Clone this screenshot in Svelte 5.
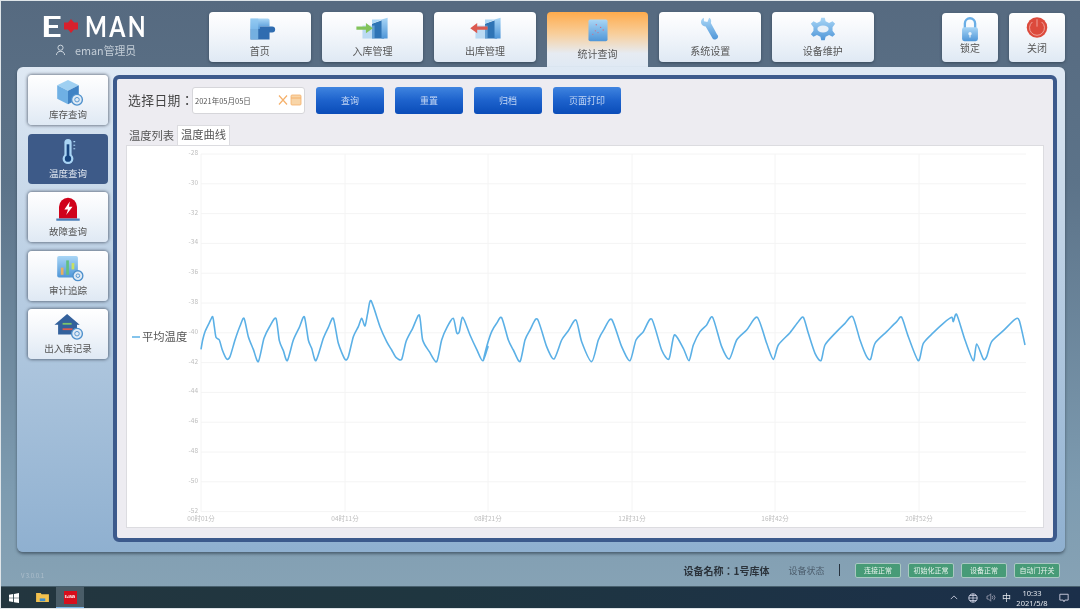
<script>
  const navItems = [
    { label: "首页", icon: "home" },
    { label: "入库管理", icon: "in" },
    { label: "出库管理", icon: "out" },
    { label: "统计查询", icon: "stats", active: true },
    { label: "系统设置", icon: "wrench" },
    { label: "设备维护", icon: "gear" }
  ];
  const sideItems = [
    { label: "库存查询", icon: "box" },
    { label: "温度查询", icon: "thermo", active: true },
    { label: "故障查询", icon: "alarm" },
    { label: "审计追踪", icon: "audit" },
    { label: "出入库记录", icon: "house" }
  ];
  const actions = ["查询", "重置", "归档", "页面打印"];
  const badges = ["连接正常", "初始化正常", "设备正常", "自动门开关"];

  // chart svg origin on the page
  const ox = 127;
  const oy = 146;
  const yTicks = [];
  for (let i = 0; i < 13; i++) yTicks.push({ label: -28 - i * 2, y: 154 + i * 29.8 - oy });
  const xTicks = [
    ["00时01分", 201], ["04时11分", 345], ["08时21分", 488],
    ["12时31分", 632], ["16时42分", 775], ["20时52分", 919]
  ].map(([label, x]) => ({ label, x: x - ox }));

  // traced from crops of the curve
  const seg1 = [[33,178],[38,150],[45,125],[58,98],[68,80],[73,110],[78,142],[88,150],[97,180],[110,207],[120,200],[135,150],[150,108],[162,85],[175,140],[190,178],[205,215],[222,145],[240,108],[258,85],[268,152],[280,182],[292,212],[310,150],[328,112],[343,80],[355,150],[365,175],[378,212],[400,145],[415,112],[430,85],[445,160],[465,208],[475,200],[490,140],[505,110],[515,85],[525,108],[533,70],[543,32],[570,110],[590,155],[605,180],[618,202],[635,208],[648,155],[668,115],[688,75],[698,150],[718,185],[740,215],[755,150],[772,110],[790,85],[800,128],[808,125],[818,82],[840,135],[860,178],[878,212],[894,170]];
  const seg2 = [[10,212],[20,170],[35,125],[50,100],[65,83],[85,150],[100,180],[120,215],[135,150],[150,120],[172,87],[200,170],[222,207],[245,150],[265,122],[288,90],[305,155],[335,215],[355,150],[372,118],[395,88],[425,170],[450,212],[468,150],[490,125],[515,87],[545,180],[567,207],[583,135],[610,175],[627,212],[640,165],[660,125],[680,105],[698,82],[725,170],[748,207],[770,150],[800,120],[832,82],[860,160],[880,208]];
  const seg3 = [[25,165],[60,128],[85,95],[100,82],[115,130],[135,190],[153,212],[165,165],[195,130],[225,100],[248,80],[270,150],[290,200],[302,207],[315,160],[350,125],[380,95],[395,82],[415,140],[445,212],[460,160],[490,128],[520,100],[545,82],[550,95],[560,73],[585,150],[610,212],[620,162],[640,207],[650,200],[665,155],[700,122],[735,88],[748,92],[765,165]];
  const toChart = (pts, x0) => pts.map(([x, y]) => [x0 + x / 3 - ox, 290 + y / 3 - oy]);
  const pts = [...toChart(seg1, 190), ...toChart(seg2, 480), ...toChart(seg3, 770)];

  // catmull-rom so the peaks stay on the traced points
  let curve = `M${pts[0][0]} ${pts[0][1]}`;
  for (let i = 0; i < pts.length - 1; i++) {
    const p0 = pts[i - 1] || pts[i];
    const p1 = pts[i];
    const p2 = pts[i + 1];
    const p3 = pts[i + 2] || p2;
    const c1x = p1[0] + (p2[0] - p0[0]) / 8;
    const c1y = p1[1] + (p2[1] - p0[1]) / 8;
    const c2x = p2[0] - (p3[0] - p1[0]) / 8;
    const c2y = p2[1] - (p3[1] - p1[1]) / 8;
    curve += ` C${c1x} ${c1y} ${c2x} ${c2y} ${p2[0]} ${p2[1]}`;
  }
</script>

{#snippet icon(name)}
  <svg class="icon" viewBox="0 0 40 30" aria-hidden="true">
    <defs>
      <linearGradient id="sky-{name}" x1="0" y1="0" x2="0" y2="1">
        <stop offset="0" stop-color="#a9d6f6" />
        <stop offset="1" stop-color="#4f96d8" />
      </linearGradient>
    </defs>
    {#if name === "home"}
      <path d="M9 3h20a2 2 0 0 1 2 2v7H20v3H9z" fill="url(#sky-home)" />
      <path d="M9 15h11v-3h14a3 3 0 0 1 0 7H31v8H9z" fill="#2f6cb0" />
      <path d="M9 3h9v24H9z" fill="#8cc6f0" opacity=".75" />
    {:else if name === "in"}
      <path d="M20 9 34 4v22H20z" fill="#2f74b5" />
      <path d="M31 4 38 2v24h-7z" fill="url(#sky-in)" />
      <path d="M20 9 32 4H20z" fill="#a9d6f6" />
      <path d="M9 11h14v15H9z" fill="#8cc3ec" opacity=".55" />
      <path d="M2 12h11V8l8 6-8 6v-4H2z" fill="#82c35a" />
    {:else if name === "out"}
      <path d="M20 9 34 4v22H20z" fill="#2f74b5" />
      <path d="M31 4 38 2v24h-7z" fill="url(#sky-out)" />
      <path d="M20 9 32 4H20z" fill="#a9d6f6" />
      <path d="M9 11h14v15H9z" fill="#8cc3ec" opacity=".55" />
      <path d="M23 12H11V8l-8 6 8 6v-4h12z" fill="#dc5a50" />
    {:else if name === "stats"}
      <rect x="9" y="3" width="22" height="25" rx="2" fill="url(#sky-stats)" />
      <g fill="#d0708a">
        <circle cx="14" cy="20" r=".8" /><circle cx="17" cy="16" r=".8" />
        <circle cx="20" cy="18" r=".8" /><circle cx="23" cy="12" r=".8" />
        <circle cx="26" cy="15" r=".8" /><circle cx="18" cy="9" r=".8" />
      </g>
    {:else if name === "wrench"}
      <path d="M13 2c-3 1-4 4-3 7 1 2 3 3 5 3l8 14c1 2 5 1 6-1 1-2 0-3-1-4l-7-13c1-3 0-5-2-6l-2 5-4-1z" fill="url(#sky-wrench)" />
    {:else if name === "gear"}
      <path d="M18 2h4l1 4 4 2 4-2 3 3-3 4v4l3 4-3 3-4-2-4 2-1 4h-4l-1-4-4-2-4 2-3-3 3-4v-4L6 9l3-3 4 2 4-2z" fill="url(#sky-gear)" />
      <ellipse cx="20" cy="15" rx="6.500" ry="4" fill="#e8f0f8" />
    {:else if name === "box"}
      <path d="M20 1 32 7 20 13 8 7z" fill="#9fd0f2" />
      <path d="M8 7l12 6v15L8 22z" fill="#6fb0e4" />
      <path d="M32 7 20 13v15l12-6z" fill="#3f82c4" />
      <circle cx="30" cy="23" r="6" fill="#dfeaf5" stroke="#4d90cc" stroke-width="1.500" />
      <circle cx="30" cy="23" r="2.500" fill="none" stroke="#4d90cc" />
    {:else if name === "thermo"}
      <rect x="16" y="1" width="8" height="21" rx="4" fill="#a9d4f4" />
      <circle cx="20" cy="23" r="6" fill="#a9d4f4" />
      <rect x="18.500" y="7" width="3" height="15" fill="#17457f" />
      <circle cx="20" cy="23" r="3.500" fill="#17457f" />
      <path d="M26 4h2M26 8h2M26 12h2" stroke="#a9d4f4" stroke-width="1.200" />
    {:else if name === "alarm"}
      <path d="M10 25V12a10 10 0 0 1 20 0v13z" fill="#d0021b" />
      <path d="M7 25h26v2.500H7z" fill="#4d80b8" />
      <path d="M22 6l-6 9h4l-2 6 7-9h-4z" fill="#fff" />
    {:else if name === "audit"}
      <rect x="8" y="1" width="23" height="24" rx="2" fill="url(#sky-audit)" />
      <rect x="12" y="14" width="3" height="8" fill="#e8b060" />
      <rect x="18" y="6" width="3" height="16" fill="#62c080" />
      <rect x="24" y="9" width="3" height="7" fill="#c8e060" />
      <circle cx="31" cy="23" r="5.500" fill="#dfeaf5" stroke="#4d90cc" stroke-width="1.500" />
      <circle cx="31" cy="23" r="2" fill="none" stroke="#4d90cc" />
    {:else if name === "house"}
      <path d="M19 1 33 13h-3v11H9V13H5z" fill="#33619c" />
      <path d="M14 12h10" stroke-width="2" fill="none" stroke="#7cc36a" />
      <path d="M14 18h11" stroke-width="2" fill="none" stroke="#dc5a50" />
      <circle cx="30" cy="23" r="6" fill="#dfeaf5" stroke="#4d90cc" stroke-width="1.500" />
      <circle cx="30" cy="23" r="2.500" fill="none" stroke="#4d90cc" />
    {:else if name === "lock"}
      <path d="M14.500 14V9a5.500 5.500 0 0 1 11 0v5" fill="none" stroke="#6aaee6" stroke-width="2.500" />
      <rect x="11.500" y="13" width="17" height="15" rx="2.500" fill="url(#sky-lock)" />
      <circle cx="20" cy="20" r="1.800" fill="#eaf3fb" />
      <path d="M20 20v4" stroke="#eaf3fb" stroke-width="1.200" />
    {:else if name === "power"}
      <circle cx="20" cy="13.500" r="11" fill="#dc4a3c" />
      <path d="M15 7.500a8 8 0 1 0 10 0" fill="none" stroke="#f0a8a0" stroke-width="1" />
      <path d="M20 4.500v8" stroke="#f0a8a0" stroke-width="1" />
    {/if}
  </svg>
{/snippet}

<div class="screen">
  <header class="topbar">
    <div class="brand">
      <div class="logo">
        <span class="e">E</span>
        <svg class="plus" viewBox="0 0 16 16" aria-hidden="true">
          <path d="M8 1l3 3.500h4v7h-4L8 15l-3-3.500H1v-7h4z" fill="#d8202c" />
        </svg>
        <span class="man">MAN</span>
      </div>
      <div class="user">
        <svg viewBox="0 0 12 13" aria-hidden="true">
          <circle cx="6" cy="4" r="2.800" fill="none" stroke="#d5dde5" />
          <path d="M1.500 12c.5-3 2-4 4.500-4s4 1 4.500 4" fill="none" stroke="#d5dde5" />
        </svg>
        eman管理员
      </div>
    </div>
    <nav class="nav">
      {#each navItems as item}
        <button class="nav-btn" class:active={item.active}>
          {@render icon(item.icon)}
          <span>{item.label}</span>
        </button>
      {/each}
    </nav>
    <div class="sys">
      <button class="sys-btn">{@render icon("lock")}<span>锁定</span></button>
      <button class="sys-btn">{@render icon("power")}<span>关闭</span></button>
    </div>
  </header>

  <main class="panel">
    <aside class="side">
      {#each sideItems as item}
        <button class="side-btn" class:active={item.active}>
          {@render icon(item.icon)}
          <span>{item.label}</span>
        </button>
      {/each}
    </aside>

    <section class="content">
      <div class="toolbar">
        <span class="date-label">选择日期：</span>
        <div class="date-input">
          <span>2021年05月05日</span>
          <svg viewBox="0 0 24 12" aria-hidden="true">
            <path d="M1 1.500l8 9M9 1.500l-8 9" stroke="#f5b06a" stroke-width="1.200" fill="none" />
            <rect x="13" y="1" width="10" height="10" rx="1" fill="#f8d5a8" stroke="#f5b06a" stroke-width=".8" />
            <path d="M13 4h10" stroke="#f5b06a" />
          </svg>
        </div>
        <div class="actions">
          {#each actions as a}
            <button class="action">{a}</button>
          {/each}
        </div>
      </div>

      <div class="tabs">
        <button class="tab">温度列表</button>
        <button class="tab current">温度曲线</button>
      </div>

      <div class="chart">
        <svg viewBox="0 0 916 381" width="916" height="381">
          {#each yTicks as t}
            <line x1={xTicks[0].x} x2="899" y1={t.y} y2={t.y} stroke="#f4f4f4" />
            <text x={xTicks[0].x - 3} y={t.y + 1} text-anchor="end" class="tick">{t.label}</text>
          {/each}
          {#each xTicks as t}
            <line x1={t.x} x2={t.x} y1={yTicks[0].y} y2={yTicks[12].y} stroke="#f4f4f4" />
            <text x={t.x} y="374.500" text-anchor="middle" class="tick">{t.label}</text>
          {/each}
          <path d={curve} fill="none" stroke="#5bb0e6" stroke-width="1.600" stroke-linejoin="round" />
          <line x1="5" x2="13" y1="191" y2="191" stroke="#5bb0e6" stroke-width="1.500" />
          <text x="15" y="195" class="legend">平均温度</text>
        </svg>
      </div>
    </section>
  </main>

  <div class="statusbar">
    <span class="version">V 3.0.0.1</span>
    <div class="status">
      <strong>设备名称：1号库体</strong>
      <span class="state">设备状态</span>
      <i class="divider"></i>
      <div class="badges">
        {#each badges as b}
          <span class="badge">{b}</span>
        {/each}
      </div>
    </div>
  </div>

  <footer class="taskbar">
    <div class="tasks">
      <span class="task">
        <svg viewBox="0 0 12 12" width="10" height="10" aria-hidden="true">
          <path d="M0 2l5-.7V5.700H0zM6 1.100 12 0v5.700H6zM0 6.300h5v4.400L0 10zM6 6.300h6V12l-6-1z" fill="#fff" />
        </svg>
      </span>
      <span class="task">
        <svg viewBox="0 0 14 12" width="13" height="11" aria-hidden="true">
          <path d="M0 1h5l1 1.500h8V11H0z" fill="#f2c14e" />
          <rect x="4" y="7" width="6" height="3" fill="#3d8fd0" />
        </svg>
      </span>
      <span class="task running"><b>E+MAN</b></span>
    </div>
    <div class="tray">
      <svg class="t-up" viewBox="0 0 10 6" width="8" height="5" aria-hidden="true"><path d="M1 5l4-4 4 4" fill="none" stroke="#dde" /></svg>
      <svg class="t-globe" viewBox="0 0 12 12" width="10" height="10" aria-hidden="true">
        <circle cx="6" cy="6" r="5" fill="none" stroke="#eef" />
        <path d="M1 6h10M6 1v10M2 3h8M2 9h8" stroke="#eef" stroke-width=".8" />
      </svg>
      <svg class="t-vol" viewBox="0 0 14 12" width="11" height="9" aria-hidden="true">
        <path d="M1 4h2l3-3v10L3 8H1z" fill="none" stroke="#aab" />
        <path d="M8 4a3 3 0 0 1 0 4M10 2.500a5 5 0 0 1 0 7" fill="none" stroke="#aab" />
      </svg>
      <span class="ime">中</span>
      <div class="clock"><span>10:33</span><span>2021/5/8</span></div>
      <svg class="t-note" viewBox="0 0 12 12" width="10" height="10" aria-hidden="true">
        <path d="M1 1.500h10v7H7l-1 2-1-2H1z" fill="none" stroke="#dde" />
      </svg>
    </div>
  </footer>
</div>

<style>
  :global(body) {
    margin: 0;
    background: #dfe5e9;
  }

  .screen {
    width: 1079px;
    height: 607px;
    margin: 1px 0 0 1px;
    display: flex;
    flex-direction: column;
    background: linear-gradient(to bottom, #566a80 0%, #5c7389 30%, #7d9bb0 80%, #88a4b6 100%);
    font-family: "Noto Sans CJK SC", "Noto Sans", sans-serif;
    overflow: hidden;
    filter: blur(0.6px);
  }

  button {
    font-family: inherit;
    border: 0;
    padding: 0;
  }

  .icon {
    width: 40px;
    height: 30px;
    display: block;
  }

  /* header */
  .topbar {
    height: 66px;
    flex: none;
    display: flex;
    align-items: flex-start;
    padding-top: 11px;
    box-sizing: border-box;
  }

  .brand {
    width: 208px;
    flex: none;
    padding: 1px 0 0 40px;
    box-sizing: border-box;
    color: #fff;
  }

  .logo {
    display: flex;
    align-items: center;
    height: 26px;
    font: 700 29px/26px "Lato", sans-serif;
  }

  .e {
    display: inline-block;
    width: 22px;
    transform: scaleX(1.250);
    transform-origin: left;
  }

  .plus {
    width: 16px;
    height: 16px;
    margin-right: 6px;
  }

  .man {
    display: inline-block;
    letter-spacing: 3px;
    transform: scaleX(0.8);
    transform-origin: left;
  }

  .user {
    display: flex;
    align-items: center;
    gap: 9px;
    margin: 4px 0 0 14px;
    font-size: 10.800px;
    line-height: 14px;
    color: #c2ccd6;
    white-space: nowrap;
  }

  .user svg {
    width: 11px;
    height: 12px;
  }

  .nav {
    display: flex;
    gap: 11px;
    flex: none;
  }

  .nav-btn {
    width: 101.600px;
    height: 50px;
    display: flex;
    flex-direction: column;
    align-items: center;
    padding-top: 4px;
    box-sizing: border-box;
    border-radius: 4px;
    background: linear-gradient(to bottom, #fff 0%, #f4f7fb 40%, #dfe9f4 100%);
    box-shadow: 0 1px 3px rgba(30, 45, 60, 0.55);
    font-size: 10px;
    line-height: 13px;
    color: #555;
  }

  .nav-btn .icon {
    height: 26px;
    width: 36px;
    margin-bottom: 2px;
  }

  .nav-btn.active {
    height: 55px;
    border-radius: 4px 4px 0 0;
    background: linear-gradient(to bottom, #ffab4c 0%, #f8cf9c 40%, #e6ebf2 75%, #dfe9f4 100%);
    box-shadow: none;
    padding-top: 5px;
  }

  .nav-btn.active span {
    margin-top: 2px;
  }

  .sys {
    display: flex;
    gap: 11px;
    margin-left: 68.400px;
    padding-top: 1px;
  }

  .sys-btn {
    width: 56px;
    height: 49px;
    display: flex;
    flex-direction: column;
    align-items: center;
    padding-top: 2px;
    box-sizing: border-box;
    border-radius: 4px;
    background: linear-gradient(to bottom, #fff 0%, #f4f7fb 40%, #dfe9f4 100%);
    box-shadow: 0 1px 3px rgba(30, 45, 60, 0.55);
    font-size: 10px;
    line-height: 13px;
    color: #555;
  }

  .sys-btn .icon {
    height: 28px;
    margin-bottom: -2px;
  }

  /* main panel */
  .panel {
    height: 485px;
    flex: none;
    margin: 0 15px 0 16px;
    display: flex;
    gap: 5px;
    padding: 8px 8px 10px 11px;
    box-sizing: border-box;
    border-radius: 6px;
    background: linear-gradient(to bottom, #dfe9f4 0%, #bcd0e4 40%, #8fb0d0 100%);
    box-shadow: 0 2px 3px rgba(40, 55, 70, 0.6);
  }

  .side {
    width: 80px;
    flex: none;
    display: flex;
    flex-direction: column;
    gap: 8.5px;
  }

  .side-btn {
    height: 50px;
    display: flex;
    flex-direction: column;
    align-items: center;
    padding-top: 4px;
    box-sizing: border-box;
    border-radius: 4px;
    background: linear-gradient(to bottom, #fff 0%, #f4f7fb 40%, #dfe9f4 100%);
    box-shadow: 0 0 3px 1px rgba(40, 50, 65, 0.55);
    font-size: 9.500px;
    line-height: 13px;
    color: #555;
  }

  .side-btn .icon {
    width: 36px;
    height: 27px;
    margin-bottom: 2px;
  }

  .side-btn.active {
    background: #3d5a88;
    color: #dfe6ef;
    box-shadow: none;
  }

  .content {
    flex: 1;
    min-width: 0;
    padding: 8px 9px 10px;
    box-sizing: border-box;
    display: flex;
    flex-direction: column;
    background: #edecf1;
    border: 4px solid #3c5a8c;
    border-radius: 6px;
  }

  .toolbar {
    display: flex;
    align-items: center;
    height: 27px;
    padding-left: 2px;
  }

  .date-label {
    width: 64px;
    flex: none;
    margin-top: -3px;
    font-family: "Noto Sans CJK TC", "Noto Sans CJK SC", sans-serif;
    font-size: 12.800px;
    letter-spacing: 0.4px;
    white-space: nowrap;
    color: #444;
  }

  .date-input {
    width: 113px;
    height: 27px;
    flex: none;
    display: flex;
    align-items: center;
    justify-content: space-between;
    padding: 0 2px 1px 2px;
    box-sizing: border-box;
    background: #fff;
    border: 1px solid #d6d6da;
    border-radius: 3px;
    font-size: 7.500px;
    color: #555;
  }

  .date-input svg {
    width: 24px;
    height: 12px;
  }

  .actions {
    display: flex;
    gap: 11px;
    margin-left: 11px;
  }

  .action {
    width: 68px;
    height: 27px;
    padding-bottom: 1px;
    border-radius: 3px;
    background: linear-gradient(to bottom, #3f84e0 0%, #1d62cc 50%, #0a4cb8 100%);
    color: #c6d8f4;
    font-size: 9px;
  }

  .tabs {
    display: flex;
    align-items: flex-end;
    height: 20px;
    margin-top: 11px;
  }

  .tab {
    width: 51px;
    height: 18px;
    padding-bottom: 2px;
    background: transparent;
    color: #555;
    font-size: 11.300px;
    line-height: 16px;
  }

  .tab.current {
    width: 53px;
    height: 20px;
    background: #fff;
    border: 1px solid #dcdce0;
    border-bottom: 0;
    box-sizing: border-box;
    padding-bottom: 3px;
  }

  .chart {
    flex: 1;
    min-height: 0;
    background: #fff;
    border: 1px solid #dcdce0;
  }

  .chart svg {
    display: block;
  }

  .tick {
    font-size: 6.500px;
    fill: #bdbdbd;
  }

  .legend {
    font-size: 11.300px;
    fill: #555;
  }

  /* bottom */
  .statusbar {
    height: 34px;
    flex: none;
    display: flex;
    justify-content: space-between;
    padding: 0 20px 0 20px;
    box-sizing: border-box;
  }

  .version {
    align-self: flex-end;
    margin-bottom: 6px;
    font-size: 6px;
    color: #aebfcc;
  }

  .status {
    display: flex;
    align-items: center;
    height: 36px;
    font-size: 10px;
    color: #3c4a58;
  }

  .status strong {
    font-family: "Noto Sans CJK TC", "Noto Sans CJK SC", sans-serif;
    color: #2b333b;
    font-size: 10px;
    margin-right: 19px;
  }

  .state {
    font-size: 9px;
    color: #4c5d6c;
  }

  .divider {
    width: 1.500px;
    height: 12px;
    background: #26323e;
    margin: 0 15px 0 14px;
  }

  .badges {
    display: flex;
    gap: 7px;
  }

  .badge {
    width: 46px;
    height: 15px;
    text-align: center;
    box-sizing: border-box;
    border-radius: 2px;
    background: #479b77;
    border: 1px solid #a9c9c2;
    color: #e6f2ec;
    font-size: 7px;
    line-height: 13px;
    white-space: nowrap;
  }

  .taskbar {
    height: 22px;
    flex: none;
    display: flex;
    justify-content: space-between;
    align-items: center;
    background: linear-gradient(to right, #23363f, #1f3640 40%, #1b2f4a);
    border-top: 1px solid #48606e;
    box-sizing: border-box;
    color: #e4e8ee;
  }

  .tasks {
    display: flex;
    height: 100%;
    margin-left: -1px;
  }

  .task {
    width: 28px;
    display: flex;
    align-items: center;
    justify-content: center;
  }

  .task.running {
    background: #4a5d68;
    border-bottom: 1px solid #7cb6e8;
    box-sizing: border-box;
  }

  .task b {
    width: 13px;
    height: 13px;
    background: #d80e1c;
    color: #fff;
    font: 700 3px/13px "Liberation Sans", sans-serif;
    text-align: center;
  }

  .tray {
    display: flex;
    align-items: center;
    padding-right: 11px;
  }

  .t-globe {
    margin-left: 10px;
  }

  .t-vol {
    margin-left: 8px;
  }

  .ime {
    margin-left: 5px;
    font-size: 9px;
  }

  .clock {
    display: flex;
    flex-direction: column;
    align-items: center;
    width: 30px;
    margin: 0 12px 0 6px;
    font: 7.500px/10px "Noto Sans", sans-serif;
    white-space: nowrap;
  }
</style>
